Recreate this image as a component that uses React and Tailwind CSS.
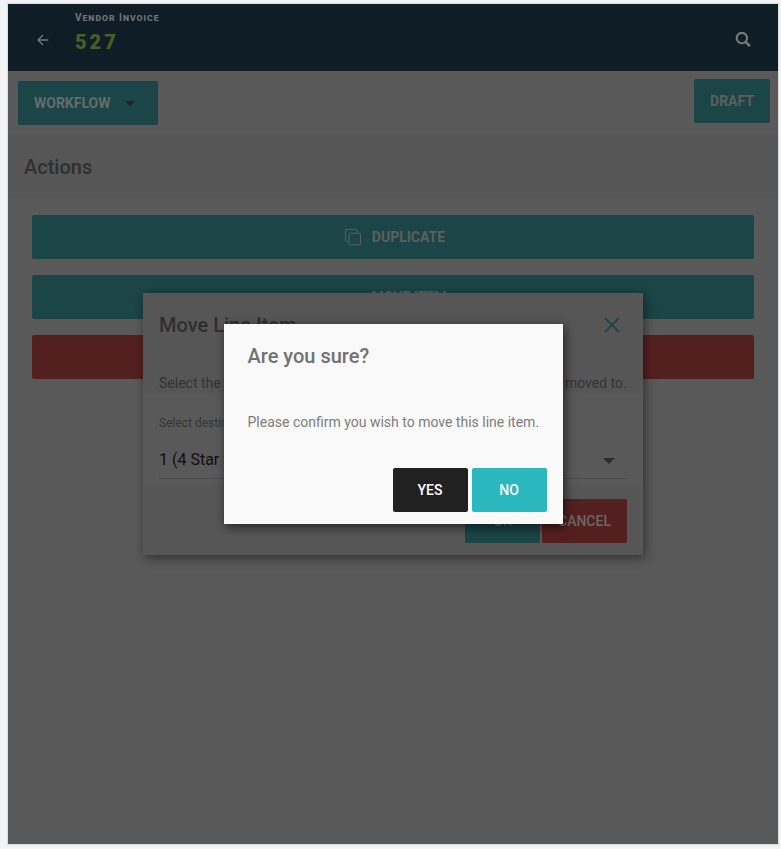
import React from "react";

const ArrowLeft = () => (
  <svg viewBox="0 0 12 12" className="h-3 w-3" fill="none" stroke="currentColor" strokeWidth="1.3">
    <path d="M11.3 6H1.2M6 1 1 6l5 5" />
  </svg>
);

const SearchIcon = () => (
  <svg viewBox="0 0 16 16" className="h-4 w-4" fill="none" stroke="currentColor">
    <circle cx="6.9" cy="6.1" r="5.2" strokeWidth="2.1" />
    <path d="m10.6 9.9 4.3 4.3" strokeWidth="2.6" />
  </svg>
);

const CopyIcon = () => (
  <svg viewBox="0 0 18 18" className="h-[18px] w-[18px]" fill="none" stroke="currentColor" strokeWidth="1">
    <rect x="5" y="5.2" width="11.6" height="11.6" rx="0.7" />
    <path d="M13.4 4.6V2.2a.8.8 0 0 0-.8-.8H2.2a.8.8 0 0 0-.8.8v10.4a.8.8 0 0 0 .8.8h1.8" />
  </svg>
);

const CloseIcon = () => (
  <svg viewBox="0 0 16 16" className="h-4 w-4" fill="none" stroke="currentColor" strokeWidth="1.9">
    <path d="m1.2 1.2 13.6 13.6M14.8 1.2 1.2 14.8" />
  </svg>
);

const Caret = ({ className }) => (
  <svg viewBox="0 0 10 5" className={className} fill="currentColor">
    <path d="M0 0h10L5 5z" />
  </svg>
);

const Header = () => (
  <header className="flex h-[67px] items-center bg-[#0f1e26] text-[#76797a]">
    <button aria-label="Back" className="flex h-10 w-[67px] items-center justify-center pt-1 pl-[2px]">
      <ArrowLeft />
    </button>
    <div className="flex-1 self-start pt-1">
      <p className="text-[10px] leading-5 font-bold tracking-[1px] text-[#727678] [font-variant:small-caps]">
        Vendor Invoice
      </p>
      <h1 className="text-xl leading-7 font-black tracking-[3px] text-[#4a5c28]">527</h1>
    </div>
    <button aria-label="Search" className="mr-[15px] flex h-10 w-10 items-center justify-center pt-1">
      <SearchIcon />
    </button>
  </header>
);

const Toolbar = () => (
  <div className="flex items-start justify-between">
    <button className="m-[10px] flex h-11 w-[140px] items-center rounded-[2px] bg-[#1b4546] px-4 text-sm font-bold text-[#676b6b]">
      WORKFLOW
      <Caret className="ml-[14px] h-[5px] w-[10px] text-[#222]" />
    </button>
    <button className="m-2 h-11 rounded-[2px] bg-[#1b4546] px-4 text-sm font-bold text-[#5c5f5f]">
      DRAFT
    </button>
  </div>
);

const Actions = () => (
  <section>
    <h2 className="bg-[#565656] px-4 py-[18px] text-xl leading-7 font-medium text-[#2f2f2f]">
      Actions
    </h2>
    <div className="flex flex-col gap-4 px-6 py-4 text-sm font-bold text-[#5c5f5f]">
      <button className="flex h-11 items-center justify-center gap-[10px] rounded-[2px] bg-[#1b4546] pl-[3px]">
        <CopyIcon />
        DUPLICATE
      </button>
      <button className="h-11 rounded-[2px] bg-[#1b4546] pl-8">MOVE ITEM</button>
      <button className="h-11 rounded-[2px] bg-[#54201f]">DELETE</button>
    </div>
  </section>
);

const MoveDialog = () => (
  <div className="absolute inset-0 flex items-center justify-center">
    <div
      role="dialog"
      aria-labelledby="move-title"
      className="w-[500px] bg-[#565656] shadow-[2px_3px_10px_rgba(0,0,0,0.45)]"
    >
      <div className="flex h-16 items-center justify-between pr-[15px] pl-4">
        <h2 id="move-title" className="text-xl font-medium text-[#2f2f2f]">
          Move Line Item
        </h2>
        <button aria-label="Close" className="flex h-8 w-8 items-center justify-center text-[#1b4546]">
          <CloseIcon />
        </button>
      </div>
      <p className="h-9 overflow-hidden px-4 pt-4 text-sm whitespace-nowrap text-[#333]">
        Select the destination area that you would like this line item to be moved to.
      </p>
      <div className="bg-[#595959] px-4 pt-5 pb-[7px]">
        <label htmlFor="destination" className="block text-xs leading-5 text-[#363636]">
          Select destination
        </label>
        <div className="relative mt-[9px] border-b border-[#4c4c4c]">
          <select
            id="destination"
            className="block h-9 w-full appearance-none bg-transparent text-base text-[#0f0f0f]"
          >
            <option>1 (4 Star Hotel)</option>
          </select>
          <Caret className="pointer-events-none absolute top-4 right-3 h-[6px] w-3 text-[#2b2b2b]" />
        </div>
      </div>
      <div className="flex justify-end gap-[2px] px-4 pt-[13px] pb-3 text-sm font-medium text-[#686868]">
        <button className="h-11 w-[75px] rounded-[2px] bg-[#1b4546]">OK</button>
        <button className="h-11 w-[85px] rounded-[2px] bg-[#54201f]">CANCEL</button>
      </div>
    </div>
  </div>
);

const ConfirmDialog = () => (
  <div className="absolute inset-0 flex items-center justify-center">
    <div
      role="alertdialog"
      aria-labelledby="confirm-title"
      className="w-[339px] bg-[#f9f9f9] shadow-[2px_3px_10px_rgba(0,0,0,0.6)]"
    >
      <h2 id="confirm-title" className="px-6 pt-4 text-xl leading-8 font-medium text-[#727272]">
        Are you sure?
      </h2>
      <p className="pt-10 pl-6 text-sm whitespace-nowrap text-[#7d7d7d]">
        Please confirm you wish to move this line item.
      </p>
      <div className="flex justify-end gap-1 px-4 pt-9 pb-3 text-sm font-medium text-white">
        <button className="h-11 w-[75px] rounded-[2px] bg-[#212121]">YES</button>
        <button className="h-11 w-[75px] rounded-[2px] bg-[#2ab8be]">NO</button>
      </div>
    </div>
  </div>
);

const App = () => {
  return (
    <div className="flex min-h-screen flex-col bg-[#f2f3f4] pt-1 pr-[3px] pb-[5px] pl-2 font-[Roboto,sans-serif]">
      <main className="relative flex-1 bg-[#595959] shadow-[0_0_1px_1px_#dcdfe0]">
        <Header />
        <Toolbar />
        <Actions />
        <MoveDialog />
        <ConfirmDialog />
      </main>
    </div>
  );
};

export default App;
